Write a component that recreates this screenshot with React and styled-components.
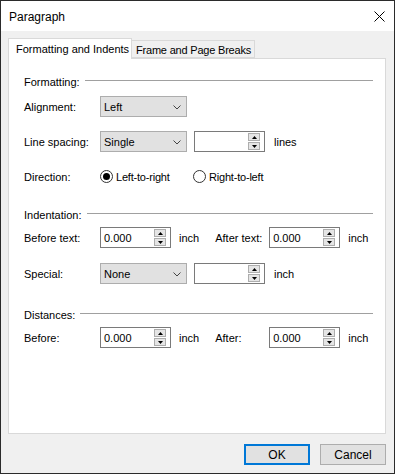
import styled, { createGlobalStyle } from 'styled-components'

const Global = createGlobalStyle`
  *, *::before, *::after { box-sizing: border-box; }
  html, body { margin: 0; padding: 0; background: #f0f0f0; }
  body { font-family: "Liberation Sans", Arial, sans-serif; font-size: 11px; color: #000; }
`

const Window = styled.div`
  width: 395px;
  height: 474px;
  border: 1px solid #2b2b2b;
  background: #f0f0f0;
  display: flex;
  flex-direction: column;
`

const TitleBar = styled.div`
  flex: none;
  height: 30px;
  background: #fff;
  display: flex;
  align-items: center;
  justify-content: space-between;
  padding: 1px 9px 0 8px;
  font-size: 12px;
`

const Body = styled.div`
  flex: 1;
  padding: 7px 8px 0 7px;
  display: flex;
  flex-direction: column;
`

const TabStrip = styled.div`
  display: flex;
  align-items: flex-end;
  height: 20px;
  flex: none;
  position: relative;
  z-index: 1;
`

const Tab = styled.div`
  height: ${p => (p.$active ? '21px' : '18px')};
  padding: ${p => (p.$active ? '0 0 0 7px' : '1px 0 0 4px')};
  width: ${p => (p.$active ? '124px' : '123px')};
  margin-bottom: ${p => (p.$active ? '-1px' : '0')};
  background: ${p => (p.$active ? '#fff' : '#f0f0f0')};
  border: 1px solid #d9d9d9;
  border-bottom: ${p => (p.$active ? 'none' : '1px solid #d9d9d9')};
  ${p => (!p.$active ? 'border-left: none;' : '')}
  display: flex;
  align-items: center;
  white-space: nowrap;
  overflow: hidden;
  letter-spacing: ${p => (p.$active ? '0' : '-0.2px')};
`

const Panel = styled.div`
  flex: none;
  height: 376px;
  background: #fff;
  border: 1px solid #d9d9d9;
  padding: 15px 12px 0 15px;
  display: flex;
  flex-direction: column;
`

const Header = styled.div`
  display: flex;
  align-items: center;
  height: 16px;
  margin-top: ${p => p.$mt || 0}px;
  &::after {
    content: '';
    flex: 1;
    height: 1px;
    background: #a0a0a0;
    margin: -4px 0 0 5px;
  }
`

const Row = styled.div`
  display: flex;
  align-items: center;
  height: 21px;
  margin-top: ${p => p.$mt || 0}px;
`

const Label = styled.span`
  width: ${p => p.$w || 76}px;
  margin-left: ${p => p.$ml || 0}px;
  flex: none;
  white-space: nowrap;
`

const Select = styled.div`
  width: 87px;
  height: 21px;
  border: 1px solid #adadad;
  background: #e1e1e1;
  display: flex;
  align-items: center;
  justify-content: space-between;
  padding: 1px 5px 0 3px;
`

const Spin = styled.div`
  width: 71px;
  height: 21px;
  border: 1px solid #7a7a7a;
  background: #fff;
  display: flex;
  align-items: center;
  margin-left: ${p => p.$ml || 0}px;
  padding-right: 4px;
`

const SpinText = styled.span`
  flex: 1;
  padding: 1px 0 0 3px;
  color: #000;
`

const SpinButtons = styled.div`
  width: 12px;
  height: 17px;
  display: flex;
  flex-direction: column;
  gap: 1px;
`

const SpinBtn = styled.div`
  flex: 1;
  border: 1px solid #adadad;
  background: #e5e5e5;
  display: flex;
  align-items: center;
  justify-content: center;
`

const Unit = styled.span`
  margin-left: ${p => p.$ml || 8}px;
`

const Radio = styled.span`
  width: 13px;
  height: 13px;
  border: 1px solid #333;
  border-radius: 50%;
  background: #fff;
  display: inline-flex;
  align-items: center;
  justify-content: center;
  margin-right: 3px;
  &::after {
    content: '';
    width: 7px;
    height: 7px;
    border-radius: 50%;
    background: ${p => (p.$on ? '#000' : 'transparent')};
  }
`

const RadioItem = styled.label`
  display: flex;
  align-items: center;
  letter-spacing: -0.2px;
  width: ${p => p.$w || 'auto'};
`

const Footer = styled.div`
  display: flex;
  justify-content: flex-end;
  gap: 10px;
  padding: 10px 0 0;
`

const Button = styled.button`
  width: 66px;
  height: 21px;
  font: inherit;
  font-size: 12px;
  background: #e1e1e1;
  border: ${p => (p.$default ? '2px solid #0078d7' : '1px solid #adadad')};
  padding: 0;
  color: #000;
`

const Chevron = () => (
  <svg width="8" height="5" viewBox="0 0 8 5">
    <path d="M0.5 0.5 L4 4 L7.5 0.5" fill="none" stroke="#444" strokeWidth="1" />
  </svg>
)

const Arrow = ({ down }) => (
  <svg width="5" height="3" viewBox="0 0 5 3">
    <path d={down ? 'M0 0 H5 L2.5 3 Z' : 'M0 3 H5 L2.5 0 Z'} fill="#000" />
  </svg>
)

const Spinner = ({ value = '', ml }) => (
  <Spin $ml={ml}>
    <SpinText>{value}</SpinText>
    <SpinButtons>
      <SpinBtn><Arrow /></SpinBtn>
      <SpinBtn><Arrow down /></SpinBtn>
    </SpinButtons>
  </Spin>
)

const Dropdown = ({ value }) => (
  <Select>
    <span>{value}</span>
    <Chevron />
  </Select>
)

const App = () => (
  <>
    <Global />
    <Window>
      <TitleBar>
        <span>Paragraph</span>
        <svg width="11" height="11" viewBox="0 0 11 11">
          <path d="M0.5 0.5 L10.5 10.5 M10.5 0.5 L0.5 10.5" stroke="#000" strokeWidth="1" />
        </svg>
      </TitleBar>
      <Body>
        <TabStrip>
          <Tab $active>Formatting and Indents</Tab>
          <Tab>Frame and Page Breaks</Tab>
        </TabStrip>
        <Panel>
          <Header>Formatting:</Header>
          <Row $mt={6}>
            <Label>Alignment:</Label>
            <Dropdown value="Left" />
          </Row>
          <Row $mt={14}>
            <Label>Line spacing:</Label>
            <Dropdown value="Single" />
            <Spinner ml={7} />
            <Unit $ml={9}>lines</Unit>
          </Row>
          <Row $mt={14}>
            <Label>Direction:</Label>
            <RadioItem $w="93px"><Radio $on />Left-to-right</RadioItem>
            <RadioItem><Radio />Right-to-left</RadioItem>
          </Row>
          <Header $mt={20}>Indentation:</Header>
          <Row $mt={4}>
            <Label>Before text:</Label>
            <Spinner value="0.000" />
            <Unit>inch</Unit>
            <Label $w={54} $ml={16}>After text:</Label>
            <Spinner value="0.000" />
            <Unit>inch</Unit>
          </Row>
          <Row $mt={15}>
            <Label>Special:</Label>
            <Dropdown value="None" />
            <Spinner ml={7} />
            <Unit $ml={9}>inch</Unit>
          </Row>
          <Header $mt={23}>Distances:</Header>
          <Row $mt={4}>
            <Label>Before:</Label>
            <Spinner value="0.000" />
            <Unit>inch</Unit>
            <Label $w={54} $ml={16}>After:</Label>
            <Spinner value="0.000" />
            <Unit>inch</Unit>
          </Row>
        </Panel>
        <Footer>
          <Button $default>OK</Button>
          <Button>Cancel</Button>
        </Footer>
      </Body>
    </Window>
  </>
)

export default App
